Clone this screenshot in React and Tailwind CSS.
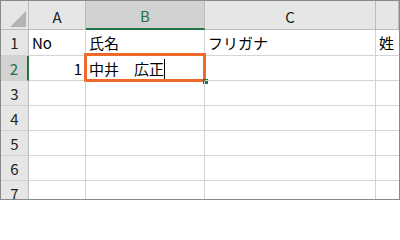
const font = { fontFamily: '"Noto Sans CJK JP", "Noto Sans", sans-serif' };

const colHeads = ["A", "B", "C", ""];

const rows = [
  ["No", "氏名", "フリガナ", "姓"],
  ["1", "中井　広正", "", ""],
  ["", "", "", ""],
  ["", "", "", ""],
  ["", "", "", ""],
  ["", "", "", ""],
  ["", "", "", ""],
];

function Corner() {
  return (
    <div className="flex items-end justify-end pr-px pb-px bg-[#e6e6e6] border-r border-b border-[#bcbcbc]">
      <svg width="18" height="18">
        <polygon points="1,17 17,17 17,1" fill="#b4b4b4" />
      </svg>
    </div>
  );
}

export default function App() {
  return (
    <div
      className="w-[400px] h-[200px] border border-[#8a8a8a] bg-white overflow-hidden text-[15px] text-black"
      style={font}
    >
      <div className="grid grid-cols-[28px_57px_119px_171px_23px] grid-rows-[29px_26px_25px_25px_25px_25px_25px_25px]">
        <Corner />
        {colHeads.map((c, i) => (
          <div
            key={"h" + i}
            className={
              i === 1
                ? "flex items-center justify-center pt-1 bg-[#d2d2d2] border-r border-[#bcbcbc] border-b-2 border-b-[#217346] text-[#217346]"
                : "flex items-center justify-center pt-1 bg-[#e6e6e6] border-r border-b border-[#bcbcbc] text-[#222]"
            }
          >
            {c}
          </div>
        ))}
        {rows.map((r, ri) => (
          <Row key={ri} n={ri + 1} cells={r} />
        ))}
      </div>
    </div>
  );
}

function Row({ n, cells }) {
  const sel = n === 2;
  return (
    <>
      <div
        className={
          sel
            ? "flex items-center justify-center pt-0.5 bg-[#d2d2d2] border-b border-[#d0d0d0] border-r-2 border-r-[#217346] text-[#217346]"
            : "flex items-center justify-center pt-0.5 bg-[#e6e6e6] border-b border-[#d0d0d0] border-r border-r-[#bcbcbc] text-[#222]"
        }
      >
        {n}
      </div>
      {cells.map((c, i) => {
        const active = sel && i === 1;
        return (
          <div
            key={i}
            className={
              "relative flex items-center pt-0.5 whitespace-nowrap border-b border-[#d4d4d4] " +
              (i < 3 ? "border-r " : "") +
              (i === 0 && sel ? "justify-end pr-[3px]" : "pl-[3px]")
            }
          >
            <span>{c}</span>
            {active && (
              <>
                <span className="w-px h-[21px] bg-black" />
                {/* selection frame over the grid lines */}
                <div className="absolute -left-[2px] -top-[3px] -right-[2px] -bottom-[2px] border-[3px] border-[#ed6a2b]" />
                <div className="absolute -right-[4px] -bottom-[4px] w-[5px] h-[5px] bg-[#217346]" />
              </>
            )}
          </div>
        );
      })}
    </>
  );
}
